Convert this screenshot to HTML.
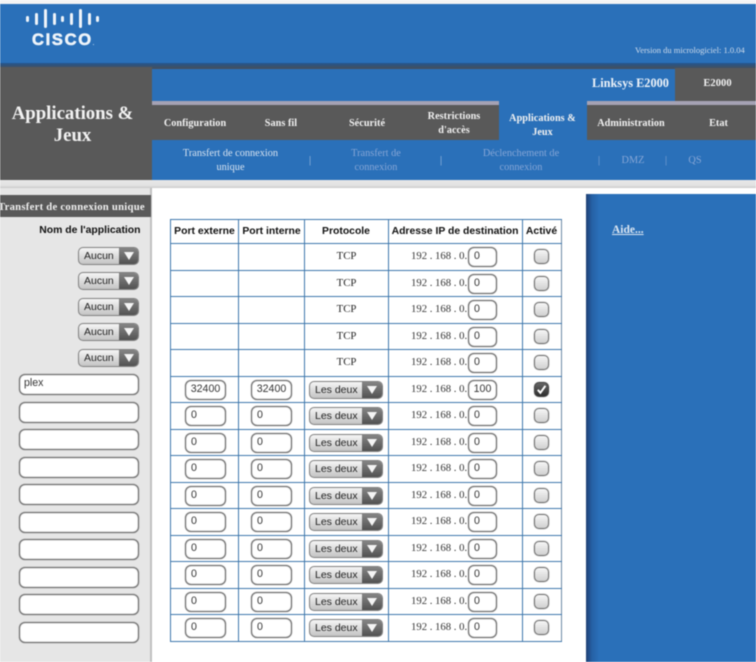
<!DOCTYPE html>
<html lang="fr">
<head>
<meta charset="utf-8">
<title>Applications &amp; Jeux</title>
<style>
html,body{margin:0;padding:0;background:#fff}
body{width:756px;height:662px;overflow:hidden;position:relative}
#p{position:absolute;left:0;top:0;width:756px;height:662px;overflow:hidden;filter:blur(.5px);font-family:"Liberation Serif",serif;color:#222}
#p div,#p span.a{position:absolute;box-sizing:border-box}
.t{white-space:nowrap;text-align:center;line-height:14px}
.b{font-weight:bold;color:#f2f2f2;font-size:10.2px;letter-spacing:.05px}
.s{color:#d9e4f1;font-size:10.3px;line-height:15px}
.d{color:#86a6d6}
.h{font:bold 10.4px/14px "Liberation Sans",sans-serif;color:#111;text-align:center;white-space:nowrap;top:225px}
.vl{width:1px;top:219px;height:422px;background:#3f78ad}
.hl{height:1px;left:170px;width:392px;background:#3f78ad}
.r{left:0;width:756px;height:26px}
.in{background:#fff;border:1px solid #6e6e6e;border-radius:6px;box-shadow:inset 0 0 1px #777,0 0 1px #888;font:10.6px/17px "Liberation Sans",sans-serif;color:#333;height:20px;padding-left:5px;white-space:nowrap}
.p1{left:185px;width:41px;top:4px}
.p2{left:251px;width:41px;top:4px}
.ip{left:468px;width:29px;top:4px}
.c{text-align:center;padding-left:0}
.sel{border:1px solid #808080;border-radius:5px;height:18px;background:linear-gradient(#f5f5f5,#c4c4c4);font:10.5px/16.5px "Liberation Sans",sans-serif;color:#222;overflow:hidden;white-space:nowrap;padding-left:5px}
.sel i{position:absolute;right:0;top:0;bottom:0;background:linear-gradient(#858585,#525252);display:block}
.sel i:after{content:"";position:absolute;left:50%;top:4px;margin-left:-5px;border-left:5px solid transparent;border-right:5px solid transparent;border-top:8px solid #f4f4f4}
.ps{left:309px;width:74px;top:5px}
.ps i{width:20px}
.as{left:78px;width:61px;height:18px}
.as i{width:19px}
.tcp{left:305px;width:83px;top:6px;font-size:10.8px;line-height:14px;text-align:center;color:#222}
.ad{left:411px;width:56px;top:6px;font-size:10.7px;line-height:14px;white-space:nowrap;color:#333}
.cb{left:534px;top:6px;width:15px;height:15px;border:1px solid #6e6e6e;border-radius:5px;box-shadow:0 0 1px #777;background:linear-gradient(#f6f6f6,#d0d0d0)}
.ln{left:19px;width:120px;height:21px}
.bar{background:#eef4fa;width:3px;border-radius:1.5px}
</style>
</head>
<body>
<div id="p">
<!-- header -->
<div style="left:0;top:0;width:756px;height:4px;background:#f4f4f4"></div>
<div style="left:0;top:4px;width:756px;height:61px;background:#2a70b9"></div>
<div style="left:0;top:63px;width:756px;height:6px;background:linear-gradient(#23558f,#484f58)"></div>
<div class="bar" style="left:26px;top:16px;height:6px"></div>
<div class="bar" style="left:35px;top:13px;height:12px"></div>
<div class="bar" style="left:44px;top:9px;height:19px"></div>
<div class="bar" style="left:52.5px;top:13px;height:12px"></div>
<div class="bar" style="left:61px;top:16px;height:6px"></div>
<div class="bar" style="left:70px;top:13px;height:12px"></div>
<div class="bar" style="left:78.5px;top:9px;height:19px"></div>
<div class="bar" style="left:87.5px;top:13px;height:12px"></div>
<div class="bar" style="left:96px;top:16px;height:6px"></div>
<div class="t" style="left:32px;top:32px;width:70px;text-align:left;font:bold 16.5px/16px 'Liberation Sans',sans-serif;letter-spacing:1.7px;color:#eef4fa;-webkit-text-stroke:.6px #eef4fa">CISCO<span style="font-size:5px;letter-spacing:0;-webkit-text-stroke:0">.</span></div>
<div class="t" style="left:635px;top:43px;font-size:8.5px;color:#cfdcec">Version du micrologiciel: 1.0.04</div>

<!-- grey left title -->
<div style="left:0;top:67px;width:152px;height:113px;background:#595959"></div>
<div class="t" style="left:0;top:102.5px;width:145px;font-size:18.8px;line-height:22.5px;font-weight:bold;color:#f2f2f2">Applications &amp;<br>Jeux</div>

<!-- nav -->
<div style="left:152px;top:69px;width:604px;height:33px;background:#2a70b9"></div>
<div style="left:675px;top:68px;width:81px;height:33px;background:#595959"></div>
<div class="t" style="left:592px;top:76px;font-size:12.3px;font-weight:bold;color:#eef3f9;line-height:15px">Linksys E2000</div>
<div class="t b" style="left:675px;top:77px;width:85px;font-size:10.5px">E2000</div>
<div style="left:152px;top:101px;width:604px;height:39px;background:#595959"></div>
<div style="left:152px;top:101px;width:347px;height:4px;background:#a5a2b4"></div>
<div style="left:587px;top:101px;width:169px;height:4px;background:#a5a2b4"></div>
<div style="left:499px;top:101px;width:88px;height:39px;background:#2a70b9"></div>
<div class="t b" style="left:152px;top:116.5px;width:86px">Configuration</div>
<div class="t b" style="left:238px;top:116.5px;width:86px">Sans fil</div>
<div class="t b" style="left:324px;top:116.5px;width:86px">Sécurité</div>
<div class="t b" style="left:411px;top:110px;width:86px;line-height:13.5px">Restrictions<br>d'accès</div>
<div class="t b" style="left:499px;top:112px;width:87px;line-height:13.5px">Applications &amp;<br>Jeux</div>
<div class="t b" style="left:587px;top:116.5px;width:88px">Administration</div>
<div class="t b" style="left:675px;top:116.5px;width:87px">Etat</div>

<!-- subnav -->
<div style="left:152px;top:140px;width:604px;height:40px;background:#2a70b9"></div>
<div class="t s" style="left:160px;top:147px;width:141px;line-height:13.5px">Transfert de connexion<br>unique</div>
<div class="t s d" style="left:305px;top:153px;width:10px;color:#a9c3e0;font-weight:normal">|</div>
<div class="t s d" style="left:335px;top:147px;width:82px;line-height:13.5px">Transfert de<br>connexion</div>
<div class="t s d" style="left:436px;top:153px;width:10px;color:#a9c3e0">|</div>
<div class="t s d" style="left:466px;top:147px;width:110px;line-height:13.5px">Déclenchement de<br>connexion</div>
<div class="t s d" style="left:594px;top:153px;width:10px">|</div>
<div class="t s d" style="left:616px;top:153px;width:34px">DMZ</div>
<div class="t s d" style="left:661px;top:153px;width:10px">|</div>
<div class="t s d" style="left:683px;top:153px;width:24px">QS</div>

<!-- band under nav -->
<div style="left:0;top:180px;width:756px;height:8px;background:linear-gradient(#e8e8e8,#e2e2e2 70%,#c8c8c8)"></div>

<!-- left column -->
<div style="left:0;top:188px;width:150px;height:474px;background:#e6e6e6"></div>
<div style="left:150px;top:188px;width:2px;height:474px;background:#c0c0c0"></div>
<div style="left:0;top:195px;width:151px;height:22px;background:#595959"></div>
<div class="t" style="left:-2px;top:200px;width:150px;font-size:10.7px;font-weight:bold;color:#f0f0f0;letter-spacing:.25px;text-align:left">Transfert de connexion unique</div>
<div class="t" style="left:0;top:224px;width:140.5px;text-align:right;font:bold 10.4px/14px 'Liberation Sans',sans-serif;color:#111">Nom de l'application</div>
<div class="sel as" style="top:246.5px">Aucun<i></i></div>
<div class="sel as" style="top:272px">Aucun<i></i></div>
<div class="sel as" style="top:297.5px">Aucun<i></i></div>
<div class="sel as" style="top:323px">Aucun<i></i></div>
<div class="sel as" style="top:348.5px">Aucun<i></i></div>
<div class="in ln" style="top:374px;line-height:17px;padding-left:4px">plex</div>
<div class="in ln" style="top:401.6px"></div>
<div class="in ln" style="top:429.1px"></div>
<div class="in ln" style="top:456.7px"></div>
<div class="in ln" style="top:484.2px"></div>
<div class="in ln" style="top:511.8px"></div>
<div class="in ln" style="top:539.3px"></div>
<div class="in ln" style="top:566.9px"></div>
<div class="in ln" style="top:594.4px"></div>
<div class="in ln" style="top:622px"></div>

<!-- white content -->
<div style="left:152px;top:188px;width:434px;height:474px;background:#fff"></div>

<!-- help -->
<div style="left:586px;top:194px;width:170px;height:468px;background:#2a70b9"></div>
<div style="left:586px;top:194px;width:13px;height:468px;background:linear-gradient(90deg,#1f3f73,#2560a5 45%,#2a70b9)"></div>
<div class="t" style="left:612px;top:223px;font-size:11.5px;font-weight:bold;color:#dbe6f2;text-decoration:underline">Aide...</div>

<!-- table grid -->
<div class="vl" style="left:170px"></div>
<div class="vl" style="left:238px"></div>
<div class="vl" style="left:304px"></div>
<div class="vl" style="left:388px"></div>
<div class="vl" style="left:522px"></div>
<div class="vl" style="left:561px;background:#6d8aa6"></div>
<div class="hl" style="top:219px"></div>
<div class="hl" style="top:243px"></div>
<div class="hl" style="top:270px"></div>
<div class="hl" style="top:296px"></div>
<div class="hl" style="top:323px"></div>
<div class="hl" style="top:349px"></div>
<div class="hl" style="top:376px"></div>
<div class="hl" style="top:402px"></div>
<div class="hl" style="top:429px"></div>
<div class="hl" style="top:455px"></div>
<div class="hl" style="top:482px"></div>
<div class="hl" style="top:508px"></div>
<div class="hl" style="top:535px"></div>
<div class="hl" style="top:561px"></div>
<div class="hl" style="top:588px"></div>
<div class="hl" style="top:614px"></div>
<div class="hl" style="top:641px"></div>

<div class="h" style="left:170px;width:69px">Port externe</div>
<div class="h" style="left:238px;width:67px">Port interne</div>
<div class="h" style="left:304px;width:84px">Protocole</div>
<div class="h" style="left:388px;width:134px">Adresse IP de destination</div>
<div class="h" style="left:522px;width:39px">Activé</div>

<!-- TCP rows -->
<div class="r" style="top:243px"><div class="tcp">TCP</div><div class="ad">192 . 168 . 0.</div><div class="in ip">0</div><div class="cb"></div></div>
<div class="r" style="top:269.5px"><div class="tcp">TCP</div><div class="ad">192 . 168 . 0.</div><div class="in ip">0</div><div class="cb"></div></div>
<div class="r" style="top:296px"><div class="tcp">TCP</div><div class="ad">192 . 168 . 0.</div><div class="in ip">0</div><div class="cb"></div></div>
<div class="r" style="top:322.5px"><div class="tcp">TCP</div><div class="ad">192 . 168 . 0.</div><div class="in ip">0</div><div class="cb"></div></div>
<div class="r" style="top:349px"><div class="tcp">TCP</div><div class="ad">192 . 168 . 0.</div><div class="in ip">0</div><div class="cb"></div></div>

<!-- plex row -->
<div class="r" style="top:375.5px"><div class="in p1 c">32400</div><div class="in p2 c">32400</div><div class="sel ps">Les deux<i></i></div><div class="ad">192 . 168 . 0.</div><div class="in ip c">100</div>
<div class="cb" style="background:linear-gradient(#666,#2e2e2e);border-color:#444"><svg style="position:absolute;left:0;top:0" width="13" height="13" viewBox="0 0 13 13"><path d="M2.8 6.8 L5.4 9.8 L10.4 2.8" fill="none" stroke="#fff" stroke-width="2"/></svg></div></div>

<!-- empty rows -->
<div class="r" style="top:402px"><div class="in p1">0</div><div class="in p2">0</div><div class="sel ps">Les deux<i></i></div><div class="ad">192 . 168 . 0.</div><div class="in ip">0</div><div class="cb"></div></div>
<div class="r" style="top:428.6px"><div class="in p1">0</div><div class="in p2">0</div><div class="sel ps">Les deux<i></i></div><div class="ad">192 . 168 . 0.</div><div class="in ip">0</div><div class="cb"></div></div>
<div class="r" style="top:455px"><div class="in p1">0</div><div class="in p2">0</div><div class="sel ps">Les deux<i></i></div><div class="ad">192 . 168 . 0.</div><div class="in ip">0</div><div class="cb"></div></div>
<div class="r" style="top:481.6px"><div class="in p1">0</div><div class="in p2">0</div><div class="sel ps">Les deux<i></i></div><div class="ad">192 . 168 . 0.</div><div class="in ip">0</div><div class="cb"></div></div>
<div class="r" style="top:508px"><div class="in p1">0</div><div class="in p2">0</div><div class="sel ps">Les deux<i></i></div><div class="ad">192 . 168 . 0.</div><div class="in ip">0</div><div class="cb"></div></div>
<div class="r" style="top:534.6px"><div class="in p1">0</div><div class="in p2">0</div><div class="sel ps">Les deux<i></i></div><div class="ad">192 . 168 . 0.</div><div class="in ip">0</div><div class="cb"></div></div>
<div class="r" style="top:561px"><div class="in p1">0</div><div class="in p2">0</div><div class="sel ps">Les deux<i></i></div><div class="ad">192 . 168 . 0.</div><div class="in ip">0</div><div class="cb"></div></div>
<div class="r" style="top:587.6px"><div class="in p1">0</div><div class="in p2">0</div><div class="sel ps">Les deux<i></i></div><div class="ad">192 . 168 . 0.</div><div class="in ip">0</div><div class="cb"></div></div>
<div class="r" style="top:614px"><div class="in p1">0</div><div class="in p2">0</div><div class="sel ps">Les deux<i></i></div><div class="ad">192 . 168 . 0.</div><div class="in ip">0</div><div class="cb"></div></div>
</div>
</body>
</html>
